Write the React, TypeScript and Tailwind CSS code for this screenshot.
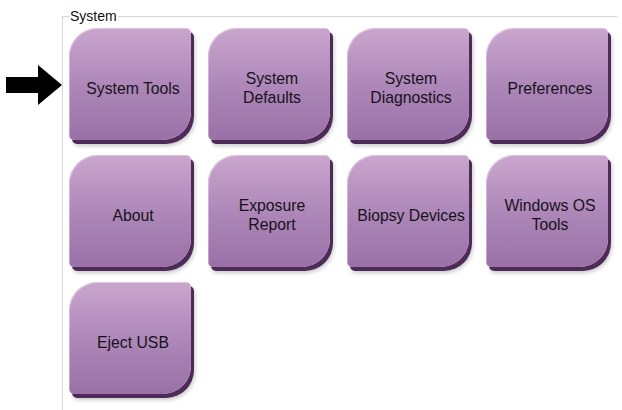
import React from 'react';

const buttons: string[][] = [
  ['System Tools'],
  ['System', 'Defaults'],
  ['System', 'Diagnostics'],
  ['Preferences'],
  ['About'],
  ['Exposure', 'Report'],
  ['Biopsy Devices'],
  ['Windows OS', 'Tools'],
  ['Eject USB'],
];

const TileButton: React.FC<{ lines: string[] }> = ({ lines }) => (
  <button
    type="button"
    className="w-[122px] h-[112px] flex flex-col items-center justify-center pt-[8px] pl-[6px] text-center text-[15.75px] leading-[19px] text-[#17121a] rounded-tl-[28px] rounded-br-[28px] rounded-tr-[5px] rounded-bl-[5px] bg-gradient-to-b from-[#caa6ce] via-[#ae88b9] to-[#9a71a7] shadow-[inset_1px_1px_0_rgba(255,255,255,0.35),3px_4px_0_#4e2a58,4px_6px_4px_rgba(0,0,0,0.22)]"
  >
    {lines.map((l) => (
      <span key={l} className="whitespace-nowrap">{l}</span>
    ))}
  </button>
);

export default function App() {
  return (
    <div className="w-[622px] h-[410px] bg-white flex font-['Liberation_Sans',Arial,sans-serif] overflow-hidden">
      <div className="w-[62px] shrink-0">
        <svg width="56" height="40" viewBox="0 0 56 40" className="mt-[65px] ml-[6px]">
          <polygon points="0,12 32,12 32,0 56,20 32,40 32,28 0,28" fill="#000" />
        </svg>
      </div>
      <fieldset className="flex-1 mt-[8px] mr-[5px] pl-[6px] border-t border-l border-[#d6d6d6]">
        <legend className="px-[1px] text-[14px] leading-[16px] text-[#111]">System</legend>
        <div className="mt-[4px] grid grid-cols-[repeat(4,122px)] gap-x-[17px] gap-y-[15px]">
          {buttons.map((b) => (
            <TileButton key={b.join(' ')} lines={b} />
          ))}
        </div>
      </fieldset>
    </div>
  );
}
